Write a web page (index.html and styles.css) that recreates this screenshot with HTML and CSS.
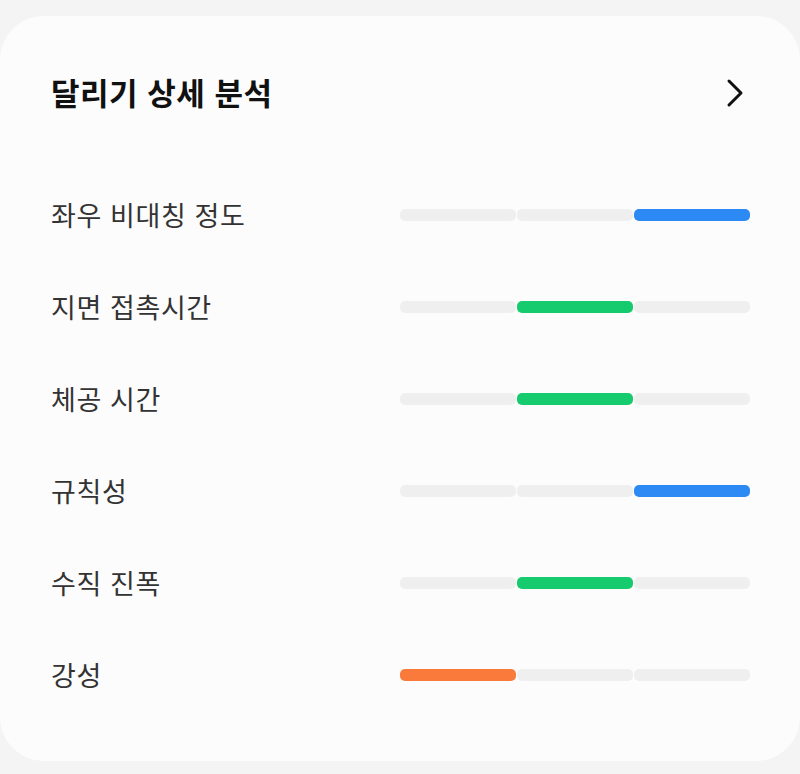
FILE: index.html
```html
<!DOCTYPE html>
<html lang="ko">
<head>
    <meta charset="UTF-8">
    <meta name="viewport" content="width=device-width, initial-scale=1.0">
    <title>달리기 상세 분석</title>
    <link rel="stylesheet" href="styles.css">
</head>
<body>
    <div class="card">
        <div class="header">
            <h1>달리기 상세 분석</h1>
            <svg class="chevron" width="18" height="30" viewBox="0 0 18 30">
                <path d="M3 3 L15 15 L3 27" fill="none" stroke="#111" stroke-width="3" stroke-linecap="round" stroke-linejoin="round"/>
            </svg>
        </div>

        <div class="row">
            <span class="label">좌우 비대칭 정도</span>
            <div class="bar"><span class="seg"></span><span class="seg"></span><span class="seg blue"></span></div>
        </div>
        <div class="row">
            <span class="label">지면 접촉시간</span>
            <div class="bar"><span class="seg"></span><span class="seg green"></span><span class="seg"></span></div>
        </div>
        <div class="row">
            <span class="label">체공 시간</span>
            <div class="bar"><span class="seg"></span><span class="seg green"></span><span class="seg"></span></div>
        </div>
        <div class="row">
            <span class="label">규칙성</span>
            <div class="bar"><span class="seg"></span><span class="seg"></span><span class="seg blue"></span></div>
        </div>
        <div class="row">
            <span class="label">수직 진폭</span>
            <div class="bar"><span class="seg"></span><span class="seg green"></span><span class="seg"></span></div>
        </div>
        <div class="row">
            <span class="label">강성</span>
            <div class="bar"><span class="seg orange"></span><span class="seg"></span><span class="seg"></span></div>
        </div>
    </div>
</body>
</html>
```

FILE: styles.css
```css
*{
    margin: 0px;
    padding: 0px;
    box-sizing: border-box;
}

body{
    background-color: #f4f4f4;
    font-family: "Noto Sans CJK KR", "Noto Sans", sans-serif;
}

.card{
    margin-top: 16px;
    height: 745px;
    background-color: #fcfcfc;
    border-radius: 44px;
    padding: 0 50px 0 51px;
}

.header{
    height: 153px;
    display: flex;
    justify-content: space-between;
    align-items: flex-start;
    padding-top: 54px;
}

h1{
    font-size: 31px;
    font-weight: 700;
    color: #111;
    line-height: 44px;
    letter-spacing: 0.5px;
}

.chevron{
    margin-top: 8px;
    margin-right: 6px;
}

.row{
    height: 92px;
    display: flex;
    align-items: center;
    justify-content: space-between;
}

.label{
    font-size: 27px;
    color: #333;
    line-height: 38px;
    letter-spacing: 0.6px;
}

.bar{
    width: 350px;
    display: flex;
    gap: 1px;
}

.seg{
    flex: 1;
    height: 12px;
    border-radius: 5px;
    background-color: #efefef;
}

.blue{ background-color: #2d8af4; }
.green{ background-color: #16cb6d; }
.orange{ background-color: #f97a3a; }
```
